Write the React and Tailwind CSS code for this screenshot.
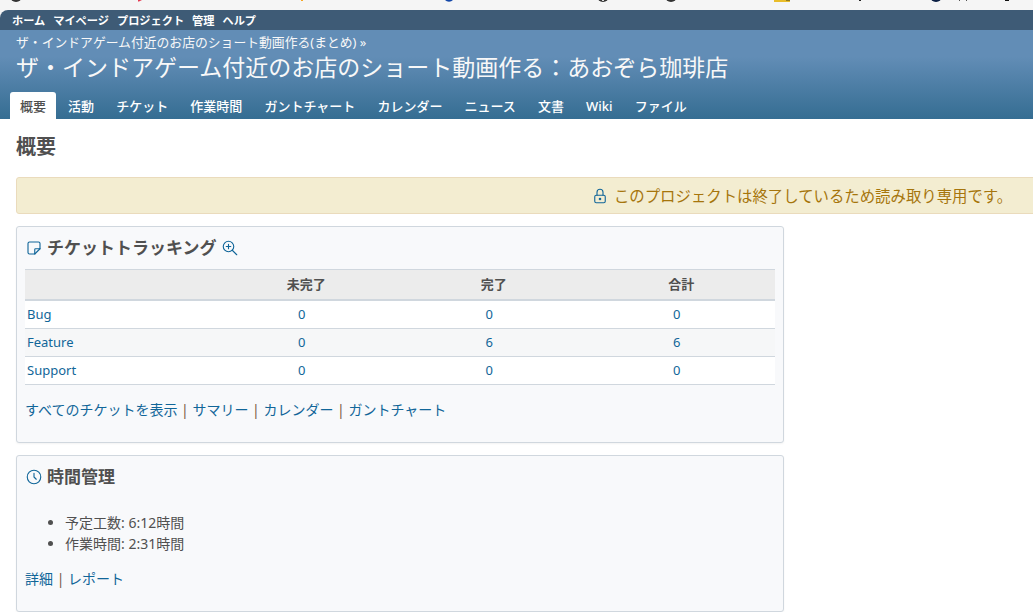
import { clsx } from 'clsx';

const topMenu = ['ホーム', 'マイページ', 'プロジェクト', '管理', 'ヘルプ'];
const tabs = ['概要', '活動', 'チケット', '作業時間', 'ガントチャート', 'カレンダー', 'ニュース', '文書', 'Wiki', 'ファイル'];

const trackers = [
  { name: 'Bug', open: 0, closed: 0, total: 0 },
  { name: 'Feature', open: 0, closed: 6, total: 6 },
  { name: 'Support', open: 0, closed: 0, total: 0 },
];

function Icon({ children }) {
  return (
    <svg
      className="w-[18px] h-[18px] flex-shrink-0 text-[#116699]"
      viewBox="0 0 24 24"
      fill="none"
      stroke="currentColor"
      strokeWidth="1.5"
      strokeLinecap="round"
      strokeLinejoin="round"
    >
      {children}
    </svg>
  );
}

function NoteIcon() {
  return (
    <Icon>
      <path d="M13 20l7 -7" />
      <path d="M13 20v-6a1 1 0 0 1 1 -1h6v-7a2 2 0 0 0 -2 -2h-12a2 2 0 0 0 -2 2v12a2 2 0 0 0 2 2h7" />
    </Icon>
  );
}

function ZoomInIcon() {
  return (
    <Icon>
      <circle cx="10" cy="10" r="7" />
      <path d="M7 10h6M10 7v6M21 21l-6 -6" />
    </Icon>
  );
}

function ClockIcon() {
  return (
    <Icon>
      <circle cx="12" cy="12" r="9" />
      <path d="M12 7v5l3 3" />
    </Icon>
  );
}

function LockIcon() {
  return (
    <Icon>
      <path d="M5 13a2 2 0 0 1 2 -2h10a2 2 0 0 1 2 2v6a2 2 0 0 1 -2 2h-10a2 2 0 0 1 -2 -2v-6z" />
      <path d="M11 16a1 1 0 1 0 2 0a1 1 0 0 0 -2 0" />
      <path d="M8 11v-4a4 4 0 1 1 8 0v4" />
    </Icon>
  );
}

// Lower edges of the bookmark icons above the page
function BookmarkStrip() {
  return (
    <svg className="block w-full h-[10px]" viewBox="0 0 1033 10" preserveAspectRatio="xMinYMin slice">
      <circle cx="16" cy="-4" r="6" fill="#333" />
      <path d="M138 0h4l-3 1.5h-1z" fill="#e53950" />
      <path d="M301 0h2v1h-2z" fill="#f5a623" />
      <circle cx="449" cy="-4" r="5.7" fill="#1246a8" />
      <circle cx="603" cy="-4" r="6" fill="#333" />
      <path d="M602 0h2v1h-2zM670 0h2v1h-2z" fill="#ddd" />
      <circle cx="671" cy="-4" r="6" fill="#333" />
      <path d="M774 0h16v2h-16z" fill="#e9bd2a" />
      <path d="M786 0h4v1h-4z" fill="#927a20" />
      <path d="M859 0h2v1h-2z" fill="#222" />
      <circle cx="936" cy="-4" r="6" fill="#0b1f44" />
      <path d="M959 0h1v1h-1zM966 0h1v1h-1z" fill="#555" />
      <path d="M1005 0h4v1h-4z" fill="#111" />
    </svg>
  );
}

function Links({ items }) {
  return (
    <p className="flex text-[14px] leading-[21px] text-[#116699] whitespace-pre">
      {items.map((item, i) => (
        <span key={item}>
          {i > 0 && <span className="text-[#7a5a48]"> | </span>}
          <a>{item}</a>
        </span>
      ))}
    </p>
  );
}

function Box({ className, children }) {
  return (
    <section
      className={clsx('w-[768px] bg-[#f8f9fb] border border-[#d0d7de] rounded-[3px] shadow-[0_1px_2px_rgba(0,0,0,0.05)]', className)}
    >
      {children}
    </section>
  );
}

export default function App() {
  return (
    <div className="w-full h-[612px] overflow-hidden bg-[#f5f5f5] text-[#505050] font-['Noto_Sans','Noto_Sans_CJK_JP',sans-serif]">
      <BookmarkStrip />
      <div className="h-[602px] bg-white rounded-tl-[8px] overflow-hidden">
        <nav className="flex h-5 gap-2 pl-3 bg-[#3e5b76] text-white text-[11.2px] font-bold leading-[22px]">
          {topMenu.map((item) => (
            <a key={item}>{item}</a>
          ))}
        </nav>

        <header className="flex flex-col h-[89px] bg-[linear-gradient(to_bottom,#628db6_0%,#628db6_30%,#356d92_100%)] text-[#f8f8f8]">
          <div className="pl-4 pt-[3px] text-[12.82px] leading-[18px]">
            ザ・インドアゲーム付近のお店のショート動画作る(まとめ) »
          </div>
          <h1 className="pl-4 text-[23px] leading-[32px]">ザ・インドアゲーム付近のお店のショート動画作る：あおぞら珈琲店</h1>
          <nav className="flex gap-[2.1px] mt-auto pl-[10px] text-[13px] font-medium leading-[29px] text-white">
            {tabs.map((tab, i) => (
              <a key={tab} className={clsx('h-[27px] px-[10px]', i === 0 && 'bg-white text-[#505050] rounded-t-[3px]')}>
                {tab}
              </a>
            ))}
          </nav>
        </header>

        <main className="pl-4">
          <h2 className="pt-[13px] h-[58px] text-[20px] leading-[30px] font-bold">概要</h2>

          <div className="flex items-center justify-center gap-[5px] w-[1571px] h-[37px] bg-[#f3edd1] border border-[#eadbbc] rounded-[3px] text-[#a6750c] text-[15.4px]">
            <LockIcon />
            <span className="pt-[2px]">このプロジェクトは終了しているため読み取り専用です。</span>
          </div>

          <Box className="h-[217px] mt-3 px-2">
            <h3 className="flex items-center gap-1 h-[42px] text-[17px] font-bold">
              <NoteIcon />
              <span>チケットトラッキング</span>
              <ZoomInIcon />
            </h3>
            <table className="w-full table-fixed border-separate border-spacing-0 text-[13px] leading-[19px]">
              <thead>
                <tr className="h-8 bg-[#ececec] [&>th]:border-t [&>th]:border-b-2 [&>th]:border-[#d0d7de]">
                  <th />
                  <th>未完了</th>
                  <th>完了</th>
                  <th>合計</th>
                </tr>
              </thead>
              <tbody className="text-center text-[#116699]">
                {trackers.map((row, i) => (
                  <tr key={row.name} className={clsx('h-7 [&>td]:border-b [&>td]:border-[#d0d7de]', i % 2 ? 'bg-[#f6f7f8]' : 'bg-white')}>
                    <td className="pl-[2px] text-left">{row.name}</td>
                    <td className="pr-[9px]">{row.open}</td>
                    <td className="pr-[9px]">{row.closed}</td>
                    <td className="pr-[9px]">{row.total}</td>
                  </tr>
                ))}
              </tbody>
            </table>
            <div className="mt-[14px]">
              <Links items={['すべてのチケットを表示', 'サマリー', 'カレンダー', 'ガントチャート']} />
            </div>
          </Box>

          <Box className="h-[157px] mt-3 px-2">
            <h3 className="flex items-center gap-1 h-[42px] text-[17px] font-bold">
              <ClockIcon />
              <span>時間管理</span>
            </h3>
            <ul className="mt-[14px] pl-10 list-disc text-[14px] leading-[21px]">
              <li>予定工数: 6:12時間</li>
              <li>作業時間: 2:31時間</li>
            </ul>
            <div className="mt-[14px]">
              <Links items={['詳細', 'レポート']} />
            </div>
          </Box>
        </main>
      </div>
    </div>
  );
}
